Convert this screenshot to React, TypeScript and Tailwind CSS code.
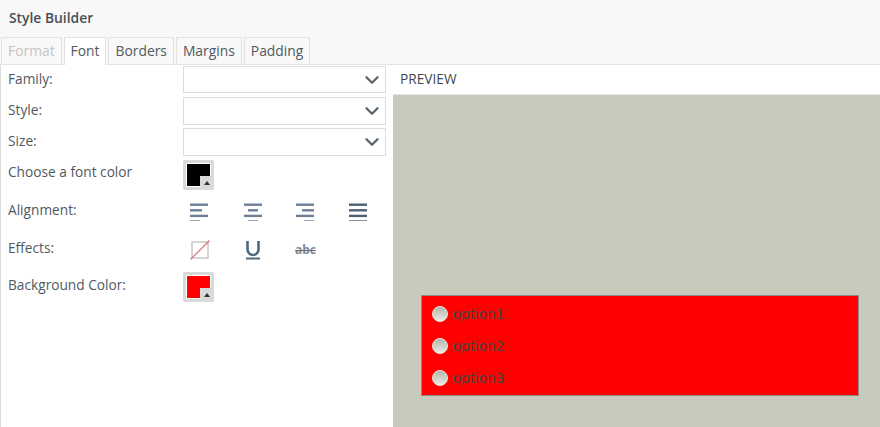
import { ChevronDown } from "lucide-react";

const TABS = ["Format", "Font", "Borders", "Margins", "Padding"];

function Select({ className }: { className: string }) {
  return (
    <div className={`flex w-[203px] items-center justify-end border border-[#dcdcdc] bg-white pr-[2px] ${className}`}>
      <ChevronDown size={22} strokeWidth={2.6} className="text-[#5b6670]" />
    </div>
  );
}

function Swatch({ color }: { color: string }) {
  return (
    <div className="relative h-[30px] w-[31px] rounded-[2px] bg-[#d9d9d9] p-[3px]">
      <div className="h-full w-full border border-white" style={{ backgroundColor: color }} />
      <div className="absolute bottom-[1px] right-[1px] flex h-[13px] w-[13px] items-center justify-center bg-[#d9d9d9]">
        <div className="h-0 w-0 border-x-[3.5px] border-b-[4px] border-x-transparent border-b-[#333]" />
      </div>
    </div>
  );
}

function AlignIcon({ rows, color }: { rows: [number, number][]; color: string }) {
  return (
    <svg width="18" height="18" viewBox="0 0 18 18" aria-hidden>
      {rows.map(([x, w], i) => (
        <rect key={i} x={x} y={0.5 + i * 5.6} width={w} height="2.4" fill={color} />
      ))}
    </svg>
  );
}

function Radio({ label }: { label: string }) {
  return (
    <div className="flex h-[32px] items-center gap-[5px]">
      <div className="h-[16px] w-[16px] rounded-full border border-[#ecece6] bg-gradient-to-b from-[#b4b7ab] to-[#ecece6]" />
      <span className="font-['DejaVu_Sans'] text-[13.5px] text-[#444]">{label}</span>
    </div>
  );
}

export default function App() {
  return (
    <div className="flex h-[427px] w-[880px] flex-col overflow-hidden bg-white font-['Open_Sans'] text-[13.7px] text-[#4f5a60]">
      <div className="flex h-[37px] items-center bg-[#f8f8f8] pl-[9px] text-[13.85px] font-semibold text-[#4a4f55]">
        Style Builder
      </div>
      <div className="flex h-[28px] items-end gap-[2px] border-b border-[#e2e2e2] bg-[#f8f8f8] pl-[1px] text-[13.85px]">
        {TABS.map((tab) => (
          <div
            key={tab}
            className={`flex h-[27px] items-center border border-b-0 border-[#e2e2e2] px-[6px] ${
              tab === "Font" ? "relative top-[1px] h-[28px] bg-white" : ""
            } ${tab === "Format" ? "text-[#c4c4c4]" : ""}`}
          >
            {tab}
          </div>
        ))}
      </div>
      <div className="flex min-h-0 flex-1">
        <div className="w-[393px] border-l border-[#dcdcdc]">
          <div className="flex h-[32px] items-start pl-[7px] pt-[1px]">
            <span className="w-[175px] leading-[26px]">Family:</span>
            <Select className="h-[27px]" />
          </div>
          <div className="flex h-[31px] items-start pl-[7px]">
            <span className="w-[175px] leading-[26px]">Style:</span>
            <Select className="h-[28px]" />
          </div>
          <div className="flex h-[32px] items-start pl-[7px]">
            <span className="w-[175px] leading-[26px]">Size:</span>
            <Select className="h-[28px]" />
          </div>
          <div className="flex h-[31px] items-start pl-[7px]">
            <span className="w-[175px] leading-[23px]">Choose a font color</span>
            <Swatch color="#000" />
          </div>
          <div className="flex h-[39px] items-center pl-[7px]">
            <span className="w-[182px]">Alignment:</span>
            <div className="flex pt-[2px]">
              <AlignIcon color="#6d7f96" rows={[[0, 18], [0, 12], [0, 18], [0, 10]]} />
              <div className="ml-[36px]">
                <AlignIcon color="#6d7f96" rows={[[0, 18], [4, 10], [0, 18], [4, 10]]} />
              </div>
              <div className="ml-[34px]">
                <AlignIcon color="#6d7f96" rows={[[0, 18], [6, 12], [0, 18], [8, 10]]} />
              </div>
              <div className="ml-[35px]">
                <AlignIcon color="#4e6076" rows={[[0, 18], [0, 18], [0, 18], [0, 18]]} />
              </div>
            </div>
          </div>
          <div className="flex h-[37px] items-center pl-[7px]">
            <span className="w-[182px]">Effects:</span>
            <div className="flex items-center pt-[3px]">
              <svg width="20" height="20" viewBox="0 0 20 20" aria-hidden>
                <rect x="2" y="2" width="16" height="16" fill="none" stroke="#c8c8c8" strokeWidth="1.5" />
                <line x1="0.5" y1="19.5" x2="19.5" y2="0.5" stroke="#d9737a" strokeWidth="1.2" />
              </svg>
              <svg width="14" height="20" viewBox="0 0 14 20" className="ml-[36px]" aria-hidden>
                <path d="M1.5 1v8.5a5.5 5.5 0 0 0 11 0V1" fill="none" stroke="#4f6a7c" strokeWidth="2.6" />
                <rect x="0" y="17.5" width="14" height="2" fill="#4f6a7c" />
              </svg>
              <div className="relative ml-[35px] flex h-[20px] w-[21px] items-center justify-center text-[12px] font-bold text-[#7f8b96]">
                abc
                <div className="absolute left-0 right-0 top-[10px] h-[1px] bg-[#5f6f7f]" />
              </div>
            </div>
          </div>
          <div className="flex items-start pl-[7px] pt-[5px]">
            <span className="w-[175px] leading-[26px]">Background Color:</span>
            <Swatch color="#f00" />
          </div>
        </div>
        <div className="flex min-w-0 flex-1 flex-col">
          <div className="flex h-[30px] items-center border-b border-[#e6e6e6] pl-[7px] text-[#3f474d]">
            PREVIEW
          </div>
          <div className="flex flex-1 flex-col justify-end bg-[#c9cabb] pb-[31px] pl-[28px] pr-[21px]">
            <div className="border border-[#8a8a8a] bg-[#f00] pb-[1px] pl-[10px] pt-[2px]">
              <Radio label="option1" />
              <Radio label="option2" />
              <Radio label="option3" />
            </div>
          </div>
        </div>
      </div>
    </div>
  );
}
